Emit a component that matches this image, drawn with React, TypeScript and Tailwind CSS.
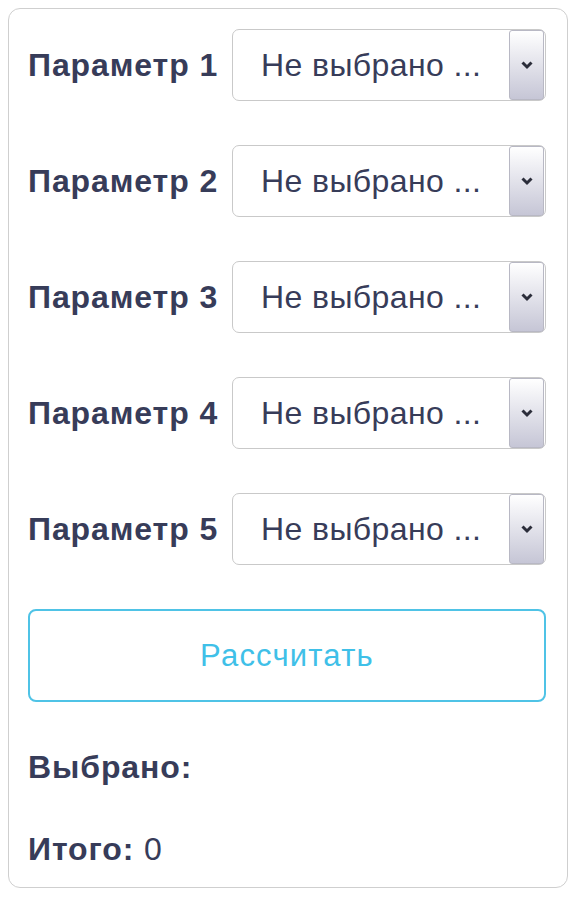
import { useState } from 'react'

const PARAMS = ['Параметр 1', 'Параметр 2', 'Параметр 3', 'Параметр 4', 'Параметр 5']

function FakeSelect() {
  return (
    <div className="relative flex h-[72px] w-[314px] shrink-0 items-center rounded-[7px] border border-[#c9c9c9] bg-white pl-[28px]">
      <span className="text-[32px] leading-none tracking-[0.4px] text-[#373c59]">Не выбрано ...</span>
      <div className="absolute top-0 right-[1px] bottom-0 flex w-[35px] items-center justify-center rounded-[3px] border border-[#b8b8c4] bg-gradient-to-b from-white to-[#c6c6d6]">
        <svg width="14" height="10" viewBox="0 0 14 10">
          <path d="M2.5 2.5 L7 7 L11.5 2.5" fill="none" stroke="#2b2d3a" strokeWidth="3" />
        </svg>
      </div>
    </div>
  )
}

export default function App() {
  const [total] = useState(0)

  return (
    <div className="bg-white p-2" style={{ fontFamily: '"Liberation Sans", Arial, sans-serif' }}>
      <div className="flex w-[560px] flex-col rounded-[12px] border border-[#cfcfcf] pt-[20px] pr-[21px] pb-[22px] pl-[19px]">
        <div className="flex flex-col gap-[44px]">
          {PARAMS.map((p) => (
            <div key={p} className="flex items-center justify-between">
              <span className="text-[32px] leading-none font-bold tracking-[0.9px] text-[#373c59]">{p}</span>
              <FakeSelect />
            </div>
          ))}
        </div>
        <button className="mt-[44px] h-[93px] w-full rounded-[8px] border-2 border-[#4fc3e6] text-[31px] leading-none tracking-[1.2px] text-[#3fc0e8]">
          Рассчитать
        </button>
        <div className="mt-[49px] text-[32px] leading-none font-bold tracking-[0.9px] text-[#373c59]">Выбрано:</div>
        <div className="mt-[50px] text-[32px] leading-none tracking-[0.9px] text-[#373c59]">
          <span className="font-bold">Итого:</span> {total}
        </div>
      </div>
    </div>
  )
}
